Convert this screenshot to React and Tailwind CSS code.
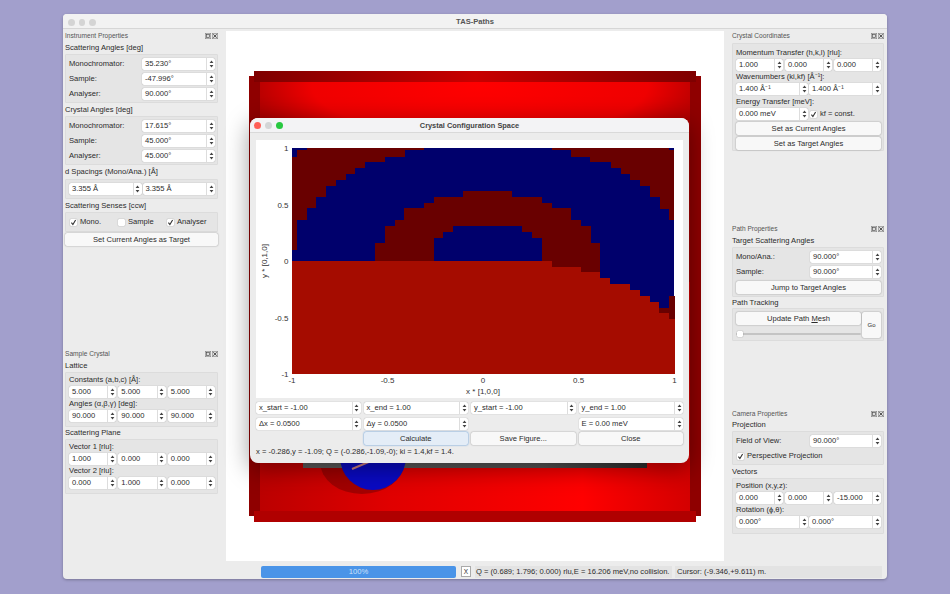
const Arrows = () => (
  <svg width="5" height="8" viewBox="0 0 5 8" className="block">
    <path d="M2.5 0.6 L4.4 3 H0.6 Z M2.5 7.4 L4.4 5 H0.6 Z" fill="#444" />
  </svg>
);

function Spin({ v, className = "" }) {
  return (
    <div className={`flex h-[12px] min-w-0 rounded-[2px] bg-white shadow-[0_0_1px_#0006] ${className}`}>
      <div className="flex-1 min-w-0 pl-[3px] leading-[12px] whitespace-nowrap overflow-hidden">{v}</div>
      <div className="w-[9px] shrink-0 flex items-center justify-center border-l border-[#ddd]">
        <Arrows />
      </div>
    </div>
  );
}

function Btn({ children, className = "bg-[#f8f8f8] shadow-[0_0_1.5px_#0007]" }) {
  return (
    <div className={`flex items-center justify-center rounded-[2px] leading-none ${className}`}>
      {children}
    </div>
  );
}

function Check({ on, label, className = "" }) {
  return (
    <div className={`flex items-center gap-[3px] h-[12px] ${className}`}>
      <div className="w-[7px] h-[7px] rounded-[1px] bg-white shadow-[0_0_1px_#0008] flex items-center justify-center shrink-0">
        {on && (
          <svg width="7" height="7" viewBox="0 0 7 7">
            <path d="M1.4 3.6 L2.9 5.6 L5.6 0.9" fill="none" stroke="#333" strokeWidth="1.1" />
          </svg>
        )}
      </div>
      <span className="whitespace-nowrap">{label}</span>
    </div>
  );
}

function DockTitle({ t }) {
  return (
    <div className="h-[12px] pt-[1px] flex items-center justify-between text-[6.6px] text-[#555]">
      <span>{t}</span>
      <div className="flex gap-[1px]">
        {[0, 1].map((i) => (
          <svg key={i} width="6" height="6" viewBox="0 0 6 6" className="block">
            <rect x="0.25" y="0.25" width="5.5" height="5.5" fill="#ddd" stroke="#777" strokeWidth="0.5" />
            {i ? (
              <path d="M1.3 1.3 L4.7 4.7 M4.7 1.3 L1.3 4.7" stroke="#333" strokeWidth="0.8" />
            ) : (
              <rect x="1.5" y="1.5" width="3" height="3" fill="none" stroke="#444" strokeWidth="0.6" />
            )}
          </svg>
        ))}
      </div>
    </div>
  );
}

const Sec = ({ t, h }) => (
  <div className="flex items-center text-[#2b2b2b] whitespace-nowrap" style={{ height: h }}>
    {t}
  </div>
);

const Box = ({ children, className = "" }) => (
  <div className={`bg-[#e5e5e5] border border-[#dcdcdc] rounded-[1px] ${className}`}>{children}</div>
);

const Row = ({ label, v, inputW }) => (
  <div className="flex items-center justify-between h-[12px]">
    <span>{label}</span>
    <Spin v={v} className={inputW} />
  </div>
);

const Lbl = ({ t }) => <div className="h-[12px] leading-[12px] whitespace-nowrap">{t}</div>;

const Three = ({ a, b, c }) => (
  <div className="grid grid-cols-3 gap-x-[2px]">
    <Spin v={a} />
    <Spin v={b} />
    <Spin v={c} />
  </div>
);

function LeftDock() {
  return (
    <div className="w-[162px] shrink-0 flex flex-col pl-[2px] pr-[7px]">
      <div className="h-[318px]">
        <DockTitle t="Instrument Properties" />
        <Sec t="Scattering Angles [deg]" h={13} />
        <Box className="h-[49px] pl-[3px] pr-[2px] pt-[3px] flex flex-col gap-[3px]">
          <Row label="Monochromator:" v="35.230°" inputW="w-[73px]" />
          <Row label="Sample:" v="-47.996°" inputW="w-[73px]" />
          <Row label="Analyser:" v="90.000°" inputW="w-[73px]" />
        </Box>
        <Sec t="Crystal Angles [deg]" h={13} />
        <Box className="h-[49px] pl-[3px] pr-[2px] pt-[3px] flex flex-col gap-[3px]">
          <Row label="Monochromator:" v="17.615°" inputW="w-[73px]" />
          <Row label="Sample:" v="45.000°" inputW="w-[73px]" />
          <Row label="Analyser:" v="45.000°" inputW="w-[73px]" />
        </Box>
        <Sec t="d Spacings (Mono/Ana.) [Å]" h={14} />
        <Box className="h-[20px] pl-[3px] pr-[2px] pt-[3px] grid grid-cols-2 gap-x-[1px]">
          <Spin v="3.355 Å" />
          <Spin v="3.355 Å" />
        </Box>
        <Sec t="Scattering Senses [ccw]" h={13} />
        <Box className="h-[20px] pl-[4px] pt-[3px] flex">
          <Check on label="Mono." className="w-[48px]" />
          <Check label="Sample" className="w-[49px]" />
          <Check on label="Analyser" />
        </Box>
        <div className="mt-[1px]">
          <Btn className="h-[13px] bg-[#f8f8f8] shadow-[0_0_1.5px_#0007]">Set Current Angles as Target</Btn>
        </div>
      </div>
      <div className="flex-1">
        <DockTitle t="Sample Crystal" />
        <Sec t="Lattice" h={13} />
        <Box className="h-[55px] pl-[3px] pr-[2px] pt-[1px]">
          <Lbl t="Constants (a,b,c) [Å]:" />
          <Three a="5.000" b="5.000" c="5.000" />
          <Lbl t="Angles (α,β,γ) [deg]:" />
          <Three a="90.000" b="90.000" c="90.000" />
        </Box>
        <Sec t="Scattering Plane" h={12} />
        <Box className="h-[55px] pl-[3px] pr-[2px] pt-[1px]">
          <Lbl t="Vector 1 [rlu]:" />
          <Three a="1.000" b="0.000" c="0.000" />
          <Lbl t="Vector 2 [rlu]:" />
          <Three a="0.000" b="1.000" c="0.000" />
        </Box>
      </div>
    </div>
  );
}

function RightDock() {
  return (
    <div className="w-[162px] shrink-0 flex flex-col pl-[7px] pr-[3px]">
      <div className="h-[193px]">
        <DockTitle t="Crystal Coordinates" />
        <Box className="mt-[2px] h-[108px] pl-[3px] pr-[2px] pt-[3px]">
          <Lbl t="Momentum Transfer (h,k,l) [rlu]:" />
          <Three a="1.000" b="0.000" c="0.000" />
          <Lbl t="Wavenumbers (ki,kf) [Å⁻¹]:" />
          <div className="grid grid-cols-2 gap-x-[1px]">
            <Spin v="1.400 Å⁻¹" />
            <Spin v="1.400 Å⁻¹" />
          </div>
          <div className="h-[1px]" />
          <Lbl t="Energy Transfer [meV]:" />
          <div className="grid grid-cols-2 gap-x-[1px]">
            <Spin v="0.000 meV" />
            <Check on label="kf = const." className="pl-[1px]" />
          </div>
          <div className="mt-[2px] flex flex-col gap-[2px]">
            <Btn className="h-[13px] bg-[#f8f8f8] shadow-[0_0_1.5px_#0007]">Set as Current Angles</Btn>
            <Btn className="h-[13px] bg-[#f8f8f8] shadow-[0_0_1.5px_#0007]">Set as Target Angles</Btn>
          </div>
        </Box>
      </div>
      <div className="h-[185px]">
        <DockTitle t="Path Properties" />
        <Sec t="Target Scattering Angles" h={13} />
        <Box className="h-[50px] pl-[3px] pr-[2px] pt-[3px] flex flex-col gap-[3px]">
          <Row label="Mono/Ana.:" v="90.000°" inputW="w-[71px]" />
          <Row label="Sample:" v="90.000°" inputW="w-[71px]" />
          <Btn className="h-[13px] bg-[#f8f8f8] shadow-[0_0_1.5px_#0007]">Jump to Target Angles</Btn>
        </Box>
        <Sec t="Path Tracking" h={11} />
        <Box className="h-[33px] pl-[3px] pr-[2px] pt-[3px] flex gap-[1px]">
          <div className="flex-1 flex flex-col">
            <Btn className="h-[13px] bg-[#f8f8f8] shadow-[0_0_1.5px_#0007]">
              <span>
                Update Path <span className="underline">M</span>esh
              </span>
            </Btn>
            <div className="relative h-[9px] mt-[4px] flex items-center">
              <div className="w-full h-[2px] rounded-full bg-[#c4c4c4]" />
              <div className="absolute left-[1px] w-[6px] h-[6px] rounded-[1px] bg-white shadow-[0_0_1px_#0009]" />
            </div>
          </div>
          <Btn className="w-[19px] h-[26px] text-[6px] bg-[#f8f8f8] shadow-[0_0_1.5px_#0007]">Go</Btn>
        </Box>
      </div>
      <div className="flex-1">
        <DockTitle t="Camera Properties" />
        <Sec t="Projection" h={12} />
        <Box className="h-[34px] pl-[3px] pr-[2px] pt-[3px] flex flex-col gap-[3px]">
          <Row label="Field of View:" v="90.000°" inputW="w-[71px]" />
          <Check on label="Perspective Projection" className="pl-[1px]" />
        </Box>
        <Sec t="Vectors" h={13} />
        <Box className="h-[56px] pl-[3px] pr-[2px] pt-[1px]">
          <Lbl t="Position (x,y,z):" />
          <Three a="0.000" b="0.000" c="-15.000" />
          <Lbl t="Rotation (ϕ,θ):" />
          <div className="grid grid-cols-2 gap-x-[1px]">
            <Spin v="0.000°" />
            <Spin v="0.000°" />
          </div>
        </Box>
      </div>
    </div>
  );
}

function Scene() {
  return (
    <svg viewBox="226 31 498 530" className="block w-full h-full">
      <defs>
        <linearGradient id="top" x1="0" x2="1" y1="0" y2="0">
          <stop offset="0" stopColor="#7e0000" />
          <stop offset="0.5" stopColor="#c80000" />
          <stop offset="1" stopColor="#7e0000" />
        </linearGradient>
        <radialGradient id="glowT" gradientUnits="userSpaceOnUse" cx="480" cy="85" r="240" gradientTransform="translate(0 60) scale(1 0.3)">
          <stop offset="0" stopColor="#ff0000" />
          <stop offset="0.7" stopColor="#ef0000" />
          <stop offset="1" stopColor="#a80000" />
        </radialGradient>
        <linearGradient id="bot" x1="0" x2="1" y1="0" y2="0">
          <stop offset="0" stopColor="#bb0000" />
          <stop offset="0.3" stopColor="#e00000" />
          <stop offset="0.75" stopColor="#ff0000" />
          <stop offset="1" stopColor="#d40000" />
        </linearGradient>
        <linearGradient id="gray" x1="0" x2="1" y1="0" y2="0">
          <stop offset="0" stopColor="#5c5c5c" />
          <stop offset="0.7" stopColor="#555" />
          <stop offset="1" stopColor="#2e2e2e" />
        </linearGradient>
      </defs>
      <path d="M254 71H696V76H701V516H696V522H254V516H249V76H254Z" fill="#8f0000" />
      <rect x="254" y="71" width="442" height="11" fill="url(#top)" />
      <rect x="254" y="511" width="442" height="11" fill="#b00000" />
      <rect x="260" y="82" width="430" height="200" fill="url(#glowT)" />
      <rect x="260" y="282" width="430" height="229" fill="url(#bot)" />
      <ellipse cx="362" cy="462" rx="42" ry="32" fill="#7a0000" opacity="0.55" />
      <rect x="303" y="450" width="344" height="18" fill="url(#gray)" />
      <circle cx="373" cy="457" r="33" fill="#0a0ac4" />
      <path d="M352 469 L371 461" stroke="#d08080" strokeWidth="2" />
    </svg>
  );
}

const z8 = ([a, b, c, d]) => [250 + a / 3, 250 + b / 3, 115 + c / 3, 115 + d / 3];
const z9 = ([a, b, c, d]) => [480 + a / 3, 480 + b / 3, 115 + c / 3, 115 + d / 3];
const z10 = ([a, b, c, d]) => [250 + a / 3, 250 + b / 3, 255 + c / 3, 255 + d / 3];

const dark = [
  ...[[125,140,125,405],[140,170,106,315],[170,198,98,280],[198,228,98,247],[228,257,98,212],[257,287,98,195],[287,316,98,178],[316,345,98,160],[345,404,98,142],[404,465,98,125],[465,522,98,106],
      [375,404,385,437],[404,434,333,437],[434,463,315,437],[463,522,280,437],[522,552,263,437],[552,580,247,368],[580,610,247,350],[610,640,247,333],[640,720,228,333]].map(z8),
  ...[[215,273,98,106],[273,330,98,125],[330,392,98,142],[392,422,98,160],[422,451,98,178],[451,480,98,195],[480,510,98,212],[510,540,98,247],[540,568,98,282],[568,582,106,315],
      [0,95,228,333],[95,125,247,333],[125,155,247,350],[155,185,247,368],[185,215,263,437],[215,273,280,437],[273,302,315,437],[302,332,333,437],[332,360,385,437]].map(z9),
  ...[[875,905,0,18],[905,992,0,36],[992,1050,0,52],[1258,1274,122,192],[1228,1258,158,175]].map(z10),
];
const red = [[125,905,18,357],[905,992,36,357],[992,1050,52,357],[1050,1080,70,357],[1080,1140,88,357],[1140,1170,105,357],[1170,1200,122,357],[1200,1228,140,357],[1228,1258,175,357],[1258,1274,192,357]].map(z10);

const R = (list, fill) =>
  list.map(([x0, x1, y0, y1], i) => (
    <rect key={fill + i} x={x0} y={y0} width={x1 - x0} height={y1 - y0} fill={fill} shapeRendering="crispEdges" />
  ));

function Plot() {
  const xt = [[292, "-1"], [387.6, "-0.5"], [483, "0"], [578.6, "0.5"], [674.4, "1"]];
  const yt = [[148, "1"], [204.5, "0.5"], [261, "0"], [317.5, "-0.5"], [374, "-1"]];
  return (
    <svg viewBox="256 140 427 258" className="block w-[427px] h-[258px] bg-white" fontFamily="'Liberation Sans',sans-serif" fontSize="8" fill="#333">
      <rect x="292" y="148" width="382.4" height="226" fill="#00006c" shapeRendering="crispEdges" />
      {R(dark, "#690000")}
      {R(red, "#a50c00")}
      {xt.map(([x, t]) => (
        <text key={t} x={x} y="383" textAnchor="middle">{t}</text>
      ))}
      {yt.map(([y, t]) => (
        <text key={t} x="288.5" y={y + 3} textAnchor="end">{t}</text>
      ))}
      <text x="483" y="394" textAnchor="middle">x * [1,0,0]</text>
      <text transform="translate(267 261) rotate(-90)" textAnchor="middle">y * [0,1,0]</text>
    </svg>
  );
}

function Dialog() {
  return (
    <div className="absolute left-[187px] top-[104px] w-[439px] h-[344.5px] rounded-[8px] overflow-hidden bg-[#ececec] shadow-[0_6px_24px_#0006] flex flex-col text-[#2b2b2b]">
      <div className="relative h-[15px] shrink-0 pt-[1px] bg-[#f3f3f5] border-b border-[#d9d9d9] flex items-center justify-center font-bold text-[#444] text-[7.4px]">
        <div className="absolute left-[4px] top-[4px] flex gap-[4.5px]">
          <div className="w-[6.5px] h-[6.5px] rounded-full bg-[#ff5f57]" />
          <div className="w-[6.5px] h-[6.5px] rounded-full bg-[#d3d5d6]" />
          <div className="w-[6.5px] h-[6.5px] rounded-full bg-[#28c840]" />
        </div>
        Crystal Configuration Space
      </div>
      <div className="px-[6px] pt-[7px]">
        <Plot />
        <div className="grid grid-cols-4 gap-x-[3px] gap-y-[4px] mt-[3.5px]">
          <Spin v="x_start = -1.00" />
          <Spin v="x_end = 1.00" />
          <Spin v="y_start = -1.00" />
          <Spin v="y_end = 1.00" />
          <Spin v="Δx = 0.0500" />
          <Spin v="Δy = 0.0500" />
          <div />
          <Spin v="E = 0.00 meV" />
        </div>
        <div className="grid grid-cols-4 gap-x-[3px] mt-[2.5px]">
          <div />
          <Btn className="h-[13px] bg-[#e4edf7] shadow-[0_0_2px_#2f7fd0]">Calculate</Btn>
          <Btn className="h-[13px] bg-[#f8f8f8] shadow-[0_0_1.5px_#0007]">Save Figure...</Btn>
          <Btn className="h-[13px] bg-[#f8f8f8] shadow-[0_0_1.5px_#0007]">Close</Btn>
        </div>
        <div className="mt-[1px] h-[12px] leading-[12px] whitespace-nowrap">
          x = -0.286,y = -1.09; Q = (-0.286,-1.09,-0); ki = 1.4,kf = 1.4.
        </div>
      </div>
    </div>
  );
}

export default function App() {
  return (
    <div className="w-[950px] h-[594px] bg-[#a29fcc] pl-[63px] pt-[14px] overflow-hidden font-['Liberation_Sans',sans-serif] text-[7.6px] text-[#2b2b2b]">
      <div className="relative w-[824px] h-[565px] rounded-[4px] bg-[#ececec] shadow-[0_1px_3px_#0004] flex flex-col">
        <div className="relative h-[15px] shrink-0 pt-[2px] rounded-t-[4px] bg-[#f2f2f2] border-b border-[#d6d6d6] flex items-center justify-center font-bold text-[#555] text-[7.6px]">
          <div className="absolute left-[5px] top-[5px] flex gap-[4px]">
            <div className="w-[6.5px] h-[6.5px] rounded-full bg-[#d4d4d4]" />
            <div className="w-[6.5px] h-[6.5px] rounded-full bg-[#d4d4d4]" />
            <div className="w-[6.5px] h-[6.5px] rounded-full bg-[#d4d4d4]" />
          </div>
          TAS-Paths
        </div>
        <div className="flex-1 min-h-0 flex">
          <LeftDock />
          <div className="w-[500px] shrink-0 pt-[2px] px-[1px]">
            <div className="h-full bg-white">
              <Scene />
            </div>
          </div>
          <RightDock />
        </div>
        <div className="h-[18px] shrink-0 flex items-center pl-[198px] pt-[4px] pb-[1px] gap-[4px]">
          <div className="w-[195px] h-[12px] rounded-[2px] bg-[#4a94e8] text-[#cfe2fa] flex items-center justify-center mr-[1px]">100%</div>
          <div className="w-[10px] h-[11px] bg-white border border-[#aaa] flex items-center justify-center text-[6.5px]">X</div>
          <div className="w-[197px] h-[12px] bg-[#e3e3e3] pl-[1px] leading-[12px] whitespace-nowrap">
            Q = (0.689; 1.796; 0.000) rlu,E = 16.206 meV,no collision.
          </div>
          <div className="w-[207px] h-[12px] bg-[#e3e3e3] pl-[2px] leading-[12px] -ml-[1px] whitespace-nowrap">
            Cursor: (-9.346,+9.611) m.
          </div>
        </div>
        <Dialog />
      </div>
    </div>
  );
}
